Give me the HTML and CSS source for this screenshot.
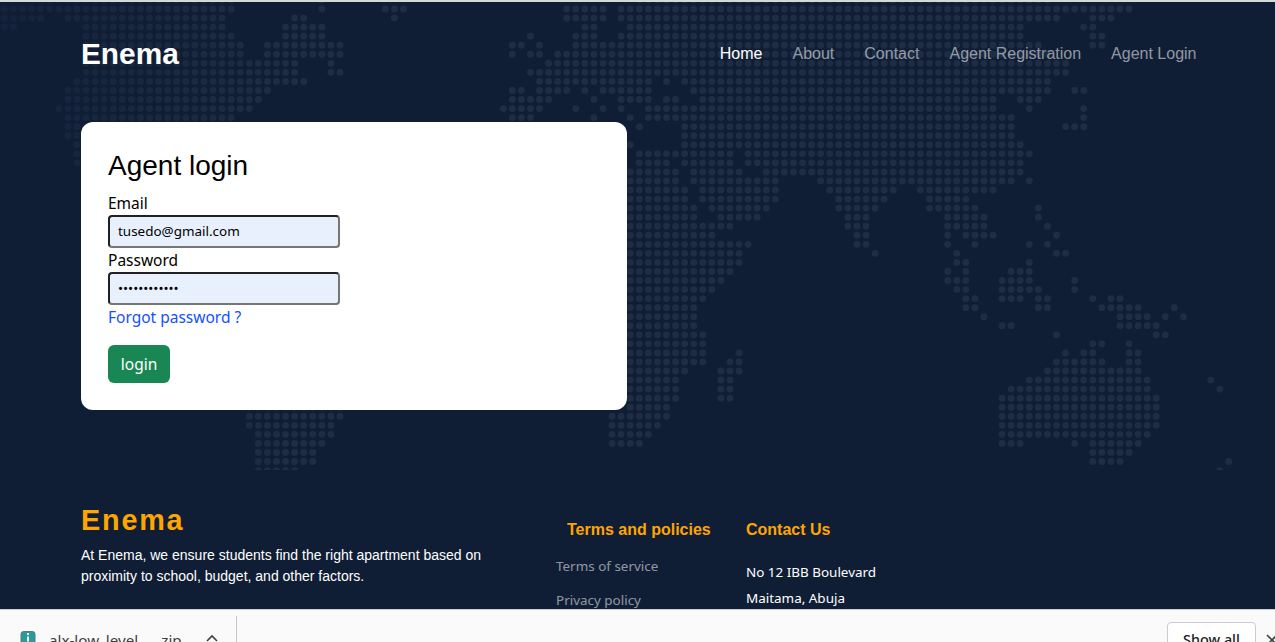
FILE: index.html
```html
<!DOCTYPE html>
<html lang="en">
<head>
<meta charset="utf-8">
<title>Enema - Agent login</title>
<link rel="stylesheet" href="styles.css">
</head>
<body>
<svg class="world-map" width="1275" height="470" aria-hidden="true">
  <defs>
    <linearGradient id="dot-fade" gradientUnits="userSpaceOnUse" x1="0" y1="0" x2="32" y2="0">
      <stop offset="0" stop-color="#14233b"/>
      <stop offset="1" stop-color="#1e2c44"/>
    </linearGradient>
  </defs>
  <g transform="translate(4.4 9) scale(9.07 9.05)">
    <path fill="none" stroke="url(#dot-fade)" stroke-width=".75" stroke-linecap="round" stroke-dasharray="0 1" d="
    M4 -1H25.01M35 -1h.01M70 -1H115.01
    M0 0H25.01M35 0h.01M42 0H44.01M62 0H66.01M68 0H124.01
    M0 1H4.01M7 1H24.01M32 1H33.01M43 1h.01M62 1H66.01M68 1H116.01M120 1H122.01
    M0 2H1.01M9 2H24.01M31 2H35.01M64 2H65.01M69 2H112.01M119 2H120.01
    M9 3H25.01M31 3H35.01M58 3h.01M63 3H65.01M68 3H112.01M120 3H121.01
    M9 4H26.01M29 4H37.01M56 4H57.01M59 4h.01M63 4H114.01M120 4H121.01
    M9 5H26.01M29 5H37.01M56 5h.01M58 5H59.01M61 5H115.01
    M9 6H32.01M36 6h.01M60 6H117.01
    M9 7H32.01M36 7H37.01M58 7H117.01
    M8 8H33.01M59 8H71.01M73 8h.01M75 8H115.01
    M7 9H29.01M56 9H57.01M59 9H62.01M64 9h.01M66 9H71.01M76 9H115.01M118 9H119.01
    M7 10H28.01M56 10H60.01M65 10h.01M68 10H71.01M73 10H74.01M77 10H109.01M112 10H114.01
    M6 11H27.01M55 11H59.01M63 11h.01M66 11h.01M68 11h.01M71 11H109.01M113 11h.01M119 11h.01
    M7 12H25.01M56 12H58.01M65 12h.01M69 12h.01M71 12H111.01M119 12h.01
    M7 13H8.01M70 13h.01M75 13H111.01M117 13H119.01
    M7 14H8.01M75 14H111.01
    M8 15h.01M69 15h.01M75 15H112.01
    M8 16h.01M70 16H80.01M82 16H113.01
    M8 17h.01M70 17H73.01M75 17H80.01M82 17H112.01
    M69 18H74.01M76 18H81.01M84 18H112.01
    M69 19H74.01M76 19H85.01M90 19H111.01M113 19h.01
    M69 20H75.01M77 20H85.01M91 20H98.01M101 20H109.01
    M69 21H75.01M77 21H85.01M92 21H97.01M102 21H106.01
    M69 22H76.01M78 22H84.01M92 22H96.01M102 22H107.01M114 22h.01
    M69 23H76.01M79 23H83.01M93 23H95.01M104 23H108.01M114 23h.01
    M69 24H80.01M93 24H95.01M104 24H108.01M115 24h.01
    M69 25H78.01M94 25H95.01M104 25h.01M106 25H109.01M116 25h.01
    M69 26H82.01M94 26H95.01M104 26h.01M107 26h.01M113 26h.01M115 26h.01
    M69 27H81.01M96 27h.01M105 27h.01M116 27H117.01
    M69 28H81.01M105 28H106.01M113 28h.01
    M69 29H80.01M104 29h.01M106 29h.01M111 29H113.01
    M69 30H79.01M104 30H106.01M110 30H113.01M118 30h.01
    M69 31H78.01M105 31H106.01M110 31H114.01M118 31h.01
    M69 32H77.01M106 32H107.01M110 32H112.01M114 32H115.01M120 32h.01M122 32H123.01
    M69 33H76.01M106 33H107.01M114 33H115.01M121 33H125.01M129 33h.01
    M69 34H76.01M108 34h.01M123 34H126.01M128 34h.01M130 34h.01
    M69 35H76.01M110 35H111.01M123 35H127.01
    M69 36H77.01M116 36h.01M127 36H128.01
    M69 37H77.01M120 37H121.01M124 37h.01
    M69 38H77.01M81 38h.01M117 38h.01M119 38H120.01M124 38H125.01
    M69 39H77.01M80 39H81.01M116 39H121.01M124 39H125.01
    M69 40H75.01M79 40H81.01M115 40H125.01
    M69 41H74.01M79 41H80.01M113 41H126.01M133 41h.01
    M69 42H74.01M79 42H80.01M111 42H126.01M134 42h.01
    M69 43H74.01M79 43H80.01M110 43H127.01
    M27 44H37.01M69 44H73.01M110 44H127.01
    M27 45H37.01M67 45H73.01M110 45H127.01
    M27 46H36.01M67 46H72.01M110 46H127.01
    M28 47H36.01M67 47H71.01M110 47H126.01
    M28 48H35.01M67 48H70.01M110 48H112.01M118 48h.01M120 48H125.01
    M28 49H34.01M120 49H124.01
    M28 50H34.01M120 50H123.01M135 50h.01
    M28 51H32.01M134 51h.01"/>
  </g>
</svg>

<div class="page">
  <header class="navbar">
    <a class="brand" href="#">Enema</a>
    <nav class="nav-links">
      <a class="nav-link active" href="#">Home</a>
      <a class="nav-link" href="#">About</a>
      <a class="nav-link" href="#">Contact</a>
      <a class="nav-link" href="#">Agent Registration</a>
      <a class="nav-link" href="#">Agent Login</a>
    </nav>
  </header>

  <main class="login-card">
    <h1 class="login-title">Agent login</h1>
    <form class="login-form">
      <label class="field-label" for="email">Email</label>
      <input class="field-input" id="email" type="email" value="tusedo@gmail.com">
      <label class="field-label" for="password">Password</label>
      <input class="field-input" id="password" type="password" value="tusedopass12">
      <a class="forgot-link" href="#">Forgot password ?</a>
      <button class="login-button" type="button">login</button>
    </form>
  </main>

  <footer class="site-footer">
    <section class="footer-about">
      <h2 class="footer-brand">Enema</h2>
      <p class="footer-text">At Enema, we ensure students find the right apartment based on proximity to school, budget, and other factors.</p>
    </section>
    <section class="footer-terms">
      <h3 class="footer-heading footer-heading-inset">Terms and policies</h3>
      <a class="footer-link" href="#">Terms of service</a>
      <a class="footer-link" href="#">Privacy policy</a>
    </section>
    <section class="footer-contact">
      <h3 class="footer-heading">Contact Us</h3>
      <p class="contact-line contact-line-first">No 12 IBB Boulevard</p>
      <p class="contact-line">Maitama, Abuja</p>
    </section>
  </footer>
</div>

<div class="download-bar">
  <div class="download-item">
    <svg class="file-icon" width="16" height="20" viewBox="0 0 16 20" aria-hidden="true">
      <rect x="1" y="0.5" width="14" height="19" rx="2.5" fill="#2b9a9a" stroke="#4d7f82"/>
      <rect x="7" y="2" width="2" height="2" fill="#fff"/>
      <rect x="7" y="5.5" width="2" height="5" fill="#fff"/>
    </svg>
    <span class="file-name">alx-low_level_....zip</span>
    <svg class="chevron" width="12" height="8" viewBox="0 0 12 8" aria-hidden="true">
      <path d="M1 7l5-5 5 5" fill="none" stroke="#3c4043" stroke-width="1.6"/>
    </svg>
  </div>
  <div class="show-all">Show all</div>
  <svg class="close-icon" width="12" height="12" viewBox="0 0 12 12" aria-hidden="true">
    <path d="M1 1l10 10M11 1L1 11" fill="none" stroke="#3c4043" stroke-width="1.6"/>
  </svg>
</div>
</body>
</html>
```
FILE: styles.css
```css
* { box-sizing: border-box; }

html, body {
  margin: 0;
  height: 100%;
  overflow: hidden;
}

body {
  position: relative;
  background: #0f1e35;
  border-top: 2px solid #d5d7da;
  font-family: "Noto Sans", "Liberation Sans", sans-serif;
  font-size: 15.5px;
  color: #000;
}

.world-map {
  position: absolute;
  top: -2px;
  left: 0;
}

.page {
  position: relative;
  display: flex;
  flex-direction: column;
}

.navbar {
  display: flex;
  justify-content: space-between;
  align-items: center;
  height: 104px;
  padding: 0 78.5px 0 81px;
  font-family: "Liberation Sans", Arial, sans-serif;
}

.brand {
  color: #fff;
  font-size: 29.8px;
  font-weight: 700;
  text-decoration: none;
}

.nav-links {
  display: flex;
  gap: 30px;
}

.nav-link {
  color: rgba(255, 255, 255, .55);
  font-size: 16px;
  text-decoration: none;
}

.nav-link.active { color: #fff; }

.login-card {
  width: 546px;
  height: 288px;
  margin: 16px 0 0 81px;
  padding: 27px;
  background: #fff;
  border-radius: 12px;
}

.login-title {
  margin: 0 0 9px;
  font-family: "Liberation Sans", Arial, sans-serif;
  font-size: 28px;
  font-weight: 400;
  line-height: 33px;
}

.login-form {
  display: flex;
  flex-direction: column;
  align-items: flex-start;
}

.field-label {
  line-height: 24px;
  height: 24px;
}

.field-input {
  width: 232px;
  height: 33px;
  padding: 0 8px 2px;
  background: #e8f0fe;
  border: 2px solid;
  border-color: #212121 #767676 #767676 #212121;
  border-radius: 4px;
  font-family: inherit;
  font-size: 13.45px;
  color: #000;
}

.forgot-link {
  color: #1550ff;
  line-height: 24px;
  text-decoration: none;
  margin-bottom: 16px;
}

.login-button {
  width: 62px;
  height: 38px;
  padding: 0;
  border: 0;
  border-radius: 6px;
  background: #198754;
  color: #fff;
  font-family: inherit;
  font-size: 15.5px;
}

.site-footer {
  display: flex;
  margin-top: 93px;
  padding-left: 81px;
}

.footer-about { width: 475px; }

.footer-brand {
  margin: 0 0 8px;
  color: #ffa500;
  font-family: "Liberation Sans", Arial, sans-serif;
  font-size: 28.8px;
  font-weight: 700;
  letter-spacing: 1.8px;
  line-height: 34px;
}

.footer-text {
  width: 410px;
  margin: 0;
  color: #fff;
  font-family: "Liberation Sans", Arial, sans-serif;
  font-size: 14px;
  line-height: 21px;
}

.footer-terms {
  display: flex;
  flex-direction: column;
  align-items: flex-start;
  width: 190px;
}

.footer-heading {
  margin: 0;
  padding-top: 16px;
  color: #ffa500;
  font-family: "Liberation Sans", Arial, sans-serif;
  font-size: 16px;
  font-weight: 700;
  line-height: 22px;
}

.footer-heading-inset { margin-left: 11px; margin-bottom: 15px; }

.footer-link {
  color: rgba(255, 255, 255, .55);
  font-size: 13.45px;
  line-height: 21px;
  margin-bottom: 13px;
  text-decoration: none;
}

.contact-line {
  margin: 0;
  color: #fff;
  font-size: 13.45px;
  line-height: 26px;
}

.contact-line-first { margin-top: 18px; }

.download-bar {
  position: fixed;
  left: 0;
  right: 0;
  bottom: 0;
  height: 33px;
  display: flex;
  overflow: hidden;
  background: #fafafa;
  border-top: 1px solid #c9ccd1;
  font-family: "Noto Sans", "Liberation Sans", sans-serif;
  font-size: 14px;
  color: #3c4043;
}

.download-item {
  display: flex;
  flex: none;
  align-items: flex-start;
  width: 237px;
  height: 40px;
  margin-top: 6px;
  padding-left: 20px;
  border-right: 1px solid #c4c6c9;
}

.file-icon { margin-top: 15px; flex: none; }

.file-name {
  flex: none;
  margin: 14px 0 0 13px;
  width: 133px;
  font-size: 15.2px;
  white-space: nowrap;
  line-height: 20px;
}

.chevron { margin: 18px 0 0 24px; flex: none; }

.show-all {
  flex: none;
  margin: 12px 0 0 930px;
  width: 89px;
  height: 40px;
  padding-top: 7px;
  text-align: center;
  background: #fff;
  border: 1px solid #c9ccd1;
  border-radius: 4px;
  font-size: 14.4px;
  font-weight: 500;
  color: #202124;
}

.close-icon { margin: 24px 0 0 10px; flex: none; }
```
